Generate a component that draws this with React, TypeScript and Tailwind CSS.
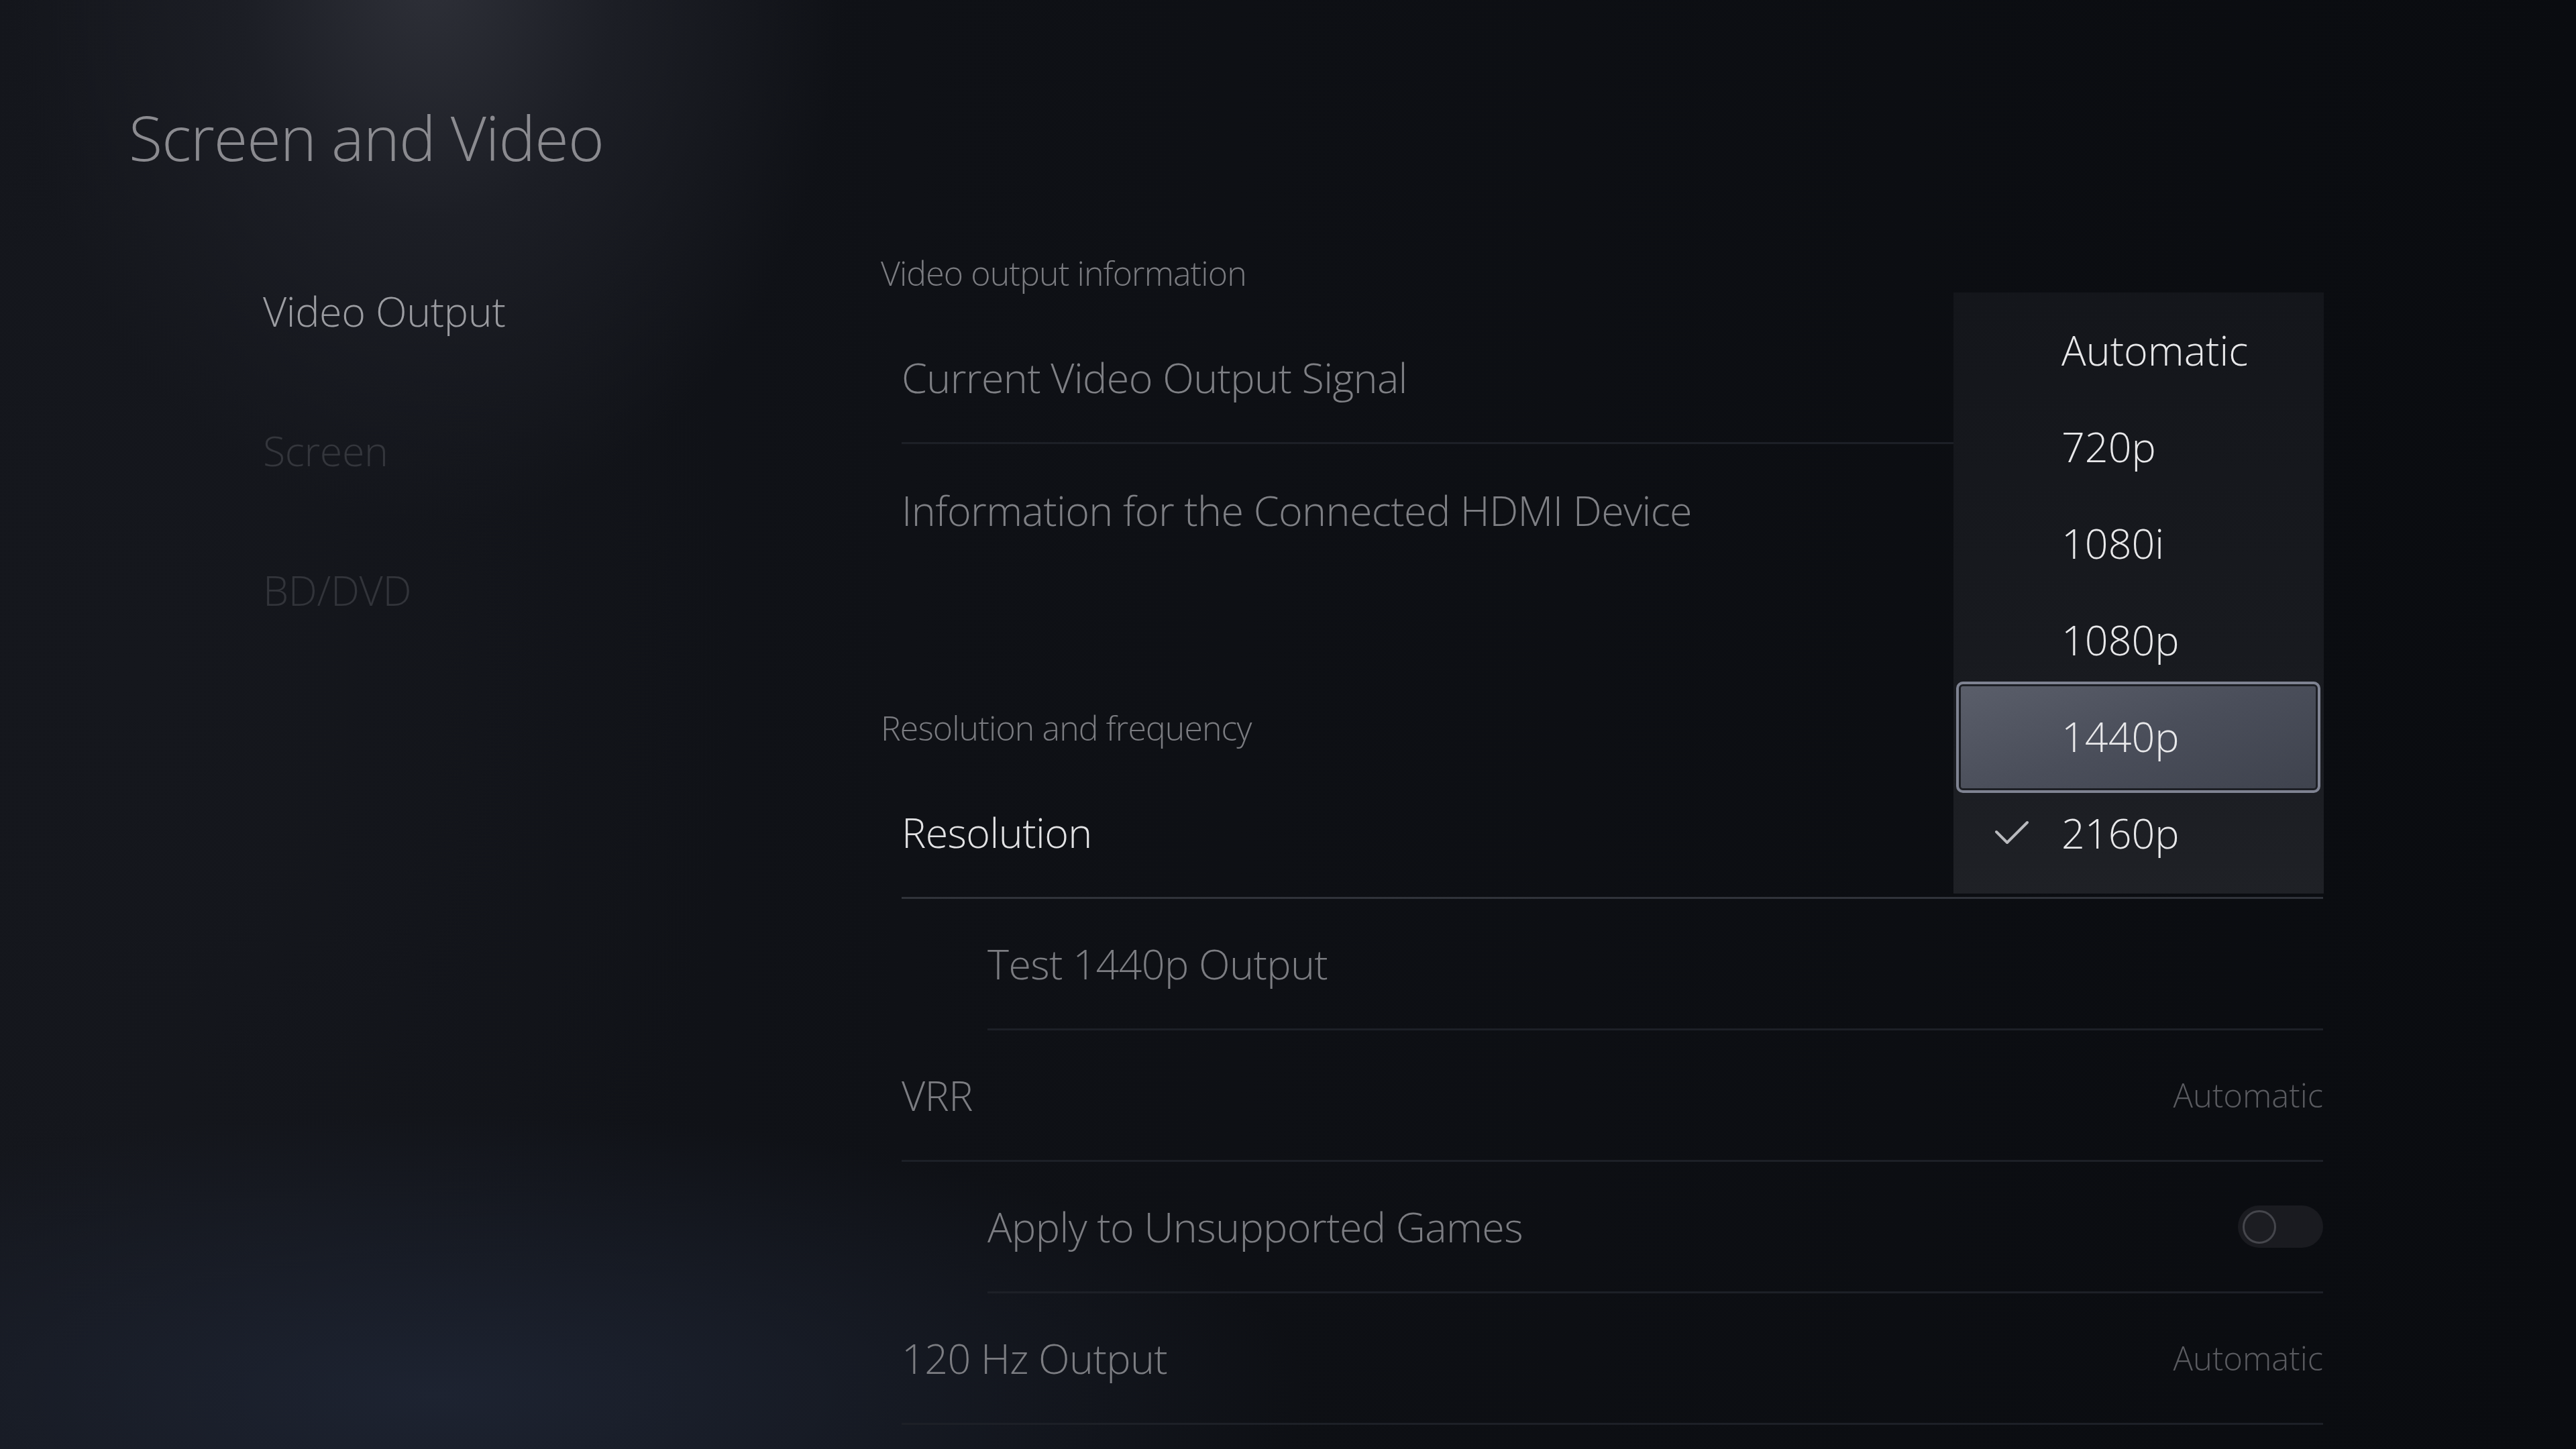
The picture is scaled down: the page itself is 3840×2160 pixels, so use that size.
import React from "react";

const FONT = "font-['Open_Sans','Noto_Sans',sans-serif] font-light";

export default function App() {
  const menu = ["Automatic", "720p", "1080i", "1080p", "1440p", "2160p"];
  return (
    <div
      className={`relative h-[2160px] w-[3840px] overflow-hidden bg-[#0b0d12] bg-[radial-gradient(ellipse_620px_820px_at_640px_-40px,#2e3038_0%,#1c1e25_45%,transparent_100%),radial-gradient(ellipse_1300px_420px_at_650px_2080px,#1d2331_0%,transparent_100%),radial-gradient(ellipse_900px_1300px_at_200px_1000px,#15171d_0%,transparent_100%),linear-gradient(90deg,#14161c_0%,#0f1116_35%,#0a0c10_100%)] ${FONT}`}
    >
      <div className="flex h-full w-full">
        {/* Left column */}
        <div className="w-[1313px] shrink-0 pl-[192px] pt-[159px]">
          <div className="text-[92px] leading-none tracking-[-1px] text-[#8b8b90]">Screen and Video</div>
          <div className="ml-[200px] mt-[108px] flex flex-col">
            <div className="flex h-[208px] items-center text-[61px] leading-none tracking-[-0.4px] text-[#9b9ca1]">
              Video Output
            </div>
            <div className="flex h-[208px] items-center text-[61px] leading-none tracking-[-0.4px] text-[#34363c]">
              Screen
            </div>
            <div className="flex h-[208px] items-center text-[61px] leading-none tracking-[-0.4px] text-[#32343a]">
              BD/DVD
            </div>
          </div>
        </div>

        {/* Right column */}
        <div className="flex-1 pr-[377px] pt-[377px]">
          <div className="flex h-[60px] items-center text-[50px] leading-none tracking-[-0.9px] text-[#7b7c81]">
            Video output information
          </div>
          <div className="mt-[29px] flex flex-col">
            <div className="ml-[31px] flex h-[196px] items-center border-b-[3px] border-[#1d2027] text-[61px] leading-none tracking-[-0.6px] text-[#7f8085]">
              Current Video Output Signal
            </div>
            <div className="ml-[31px] flex h-[196px] items-center text-[61px] leading-none tracking-[-0.6px] text-[#7f8085]">
              Information for the Connected HDMI Device
            </div>
          </div>

          <div className="mt-[197px] flex h-[60px] items-center text-[50px] leading-none tracking-[-0.9px] text-[#7b7c81]">
            Resolution and frequency
          </div>
          <div className="mt-[29px] flex flex-col">
            <div className="ml-[31px] flex h-[196px] items-center border-b-[3px] border-[#30333a] text-[61px] leading-none tracking-[-0.6px] text-[#e2e2e4]">
              Resolution
            </div>
            <div className="ml-[159px] flex h-[196px] items-center border-b-[3px] border-[#1d2027] text-[61px] leading-none tracking-[-0.6px] text-[#7c7d82]">
              Test 1440p Output
            </div>
            <div className="ml-[31px] flex h-[196px] items-center justify-between border-b-[3px] border-[#1d2027] leading-none">
              <span className="text-[61px] tracking-[-0.6px] text-[#7c7d82]">VRR</span>
              <span className="text-[49px] text-[#5a5b60]">Automatic</span>
            </div>
            <div className="ml-[159px] flex h-[196px] items-center justify-between border-b-[3px] border-[#1d2027] leading-none">
              <span className="text-[61px] tracking-[-0.6px] text-[#7c7d82]">Apply to Unsupported Games</span>
              <div className="flex h-[63px] w-[127px] items-center rounded-full bg-[#1a1b20] pl-[7px]">
                <div className="h-[50px] w-[50px] rounded-full border-[3px] border-[#45464c] bg-[#1c1d22]" />
              </div>
            </div>
            <div className="ml-[31px] flex h-[196px] items-center justify-between border-b-[3px] border-[#1d2027] leading-none">
              <span className="text-[61px] tracking-[-0.6px] text-[#7c7d82]">120 Hz Output</span>
              <span className="text-[49px] text-[#5a5b60]">Automatic</span>
            </div>
          </div>
        </div>
      </div>

      {/* Dropdown menu overlay */}
      <div className="absolute left-[2912px] top-[436px] h-[896px] w-[552px] bg-[linear-gradient(180deg,#14161b_0%,#181a1f_60%,#1f2126_100%)] pt-[13px]">
        {menu.map((m) => (
          <div key={m} className="relative flex h-[144px] items-center pl-[161px]">
            {m === "1440p" && (
              <div className="absolute -bottom-[13px] -top-[9px] left-[4px] right-[5px] rounded-[10px] border-[4px] border-[#7f8392] bg-[#1d1f25] p-[3px]">
                <div className="h-full w-full rounded-[3px] bg-[linear-gradient(160deg,#5a5e6a_0%,#4a4e5a_50%,#3f434e_100%)]" />
              </div>
            )}
            {m === "2160p" && (
              <svg
                className="absolute left-[62px] top-[54px]"
                width="50"
                height="36"
                viewBox="0 0 50 36"
                fill="none"
              >
                <polyline
                  points="2,17 18,33 48,3"
                  stroke="#b9babe"
                  strokeWidth="4"
                  strokeLinecap="round"
                  strokeLinejoin="round"
                />
              </svg>
            )}
            <span className="relative text-[61px] leading-none text-[#e8e8ea]">{m}</span>
          </div>
        ))}
      </div>
    </div>
  );
}
